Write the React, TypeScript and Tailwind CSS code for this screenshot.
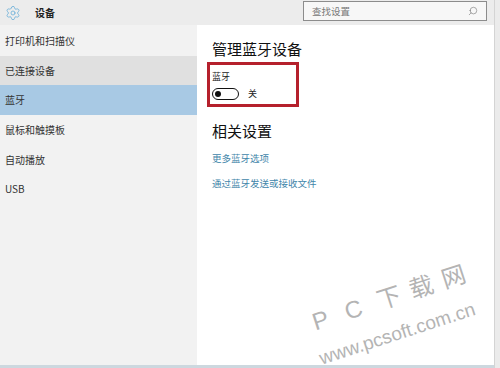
import { Search, Settings } from "lucide-react";

const font = { fontFamily: '"Noto Sans CJK SC", "Noto Sans", sans-serif' };

const items = ["打印机和扫描仪", "已连接设备", "蓝牙", "鼠标和触摸板", "自动播放", "USB"];
const mark = ["P", "C", "下", "载", "网"];

export default function App() {
  return (
    <div className="relative w-[500px] h-[368px] overflow-hidden bg-white flex" style={font}>
      <div className="flex-1 flex flex-col">
        {/* top bar */}
        <div className="h-[25px] bg-[#ececec] flex items-center shrink-0">
          <Settings size={16} strokeWidth={1.2} className="ml-[5px] text-[#6aaed8]" />
          <span className="ml-[14px] text-[10px] font-bold text-[#222]">设备</span>
          <div className="ml-auto mr-[7px] w-[184px] h-[20px] mb-[3px] border border-[#8c8c8c] bg-[#f7f7f7] flex items-center px-[8px]">
            <span className="text-[9.5px] text-[#777]">查找设置</span>
            <Search size={10} strokeWidth={1.3} className="ml-auto -scale-x-100 text-[#666]" />
          </div>
        </div>

        <div className="flex flex-1">
          {/* sidebar */}
          <div className="w-[197px] bg-[#f2f2f2] flex flex-col pt-px">
            {items.map((t) => (
              <div
                key={t}
                className={
                  "h-[29.6px] flex items-center pl-[5px] text-[10px] text-[#333] " +
                  (t === "已连接设备" ? "bg-[#e0e0e0]" : t === "蓝牙" ? "bg-[#a8c9e4]" : "")
                }
              >
                {t}
              </div>
            ))}
          </div>

          {/* content */}
          <div className="flex-1 pl-[10px] pt-[14px]">
            <div className="pl-[5px] text-[15px] text-[#111] leading-[20px]">管理蓝牙设备</div>
            <div className="mt-[3px] w-[92px] h-[45px] border-[3px] border-[#b5202c] pl-[2px] pt-[6px]">
              <div className="text-[9px] text-[#222] leading-[12px]">蓝牙</div>
              <div className="mt-[4px] flex items-center">
                <div className="w-[27px] h-[12px] rounded-full border-[1.5px] border-[#111] flex items-center pl-[2px]">
                  <div className="w-[6px] h-[6px] rounded-full bg-[#111]" />
                </div>
                <span className="ml-[9px] text-[9px] text-[#222]">关</span>
              </div>
            </div>
            <div className="mt-[14px] pl-[5px] text-[15px] text-[#111] leading-[20px]">相关设置</div>
            <div className="mt-[11px] pl-[5px] text-[9.5px] text-[#3f86aa] leading-[13px]">更多蓝牙选项</div>
            <div className="mt-[12px] pl-[5px] text-[9.5px] text-[#3f86aa] leading-[13px]">通过蓝牙发送或接收文件</div>
          </div>
        </div>
        <div className="h-[3px] bg-[#cdd8df] shrink-0" />
      </div>

      {/* scrollbar strip */}
      <div className="w-[6px] bg-[#ebebeb] border-l border-[#d4d4d4]" />

      {/* watermark */}
      <div className="absolute left-[313px] top-[308px] -rotate-[18deg] origin-left flex text-[24px] leading-[30px] text-[#b4b4b4] whitespace-nowrap" style={{ fontFamily: '"Liberation Sans", "Noto Sans CJK SC", sans-serif' }}>
        {mark.map((c) => (
          <span key={c} className="w-[34px]">{c}</span>
        ))}
      </div>
      <div className="absolute left-[320px] top-[348px] -rotate-[18deg] origin-left text-[19px] leading-[22px] text-[#b4b4b4] whitespace-nowrap" style={{ fontFamily: '"Liberation Sans", sans-serif' }}>
        www.pcsoft.com.cn
      </div>
    </div>
  );
}
